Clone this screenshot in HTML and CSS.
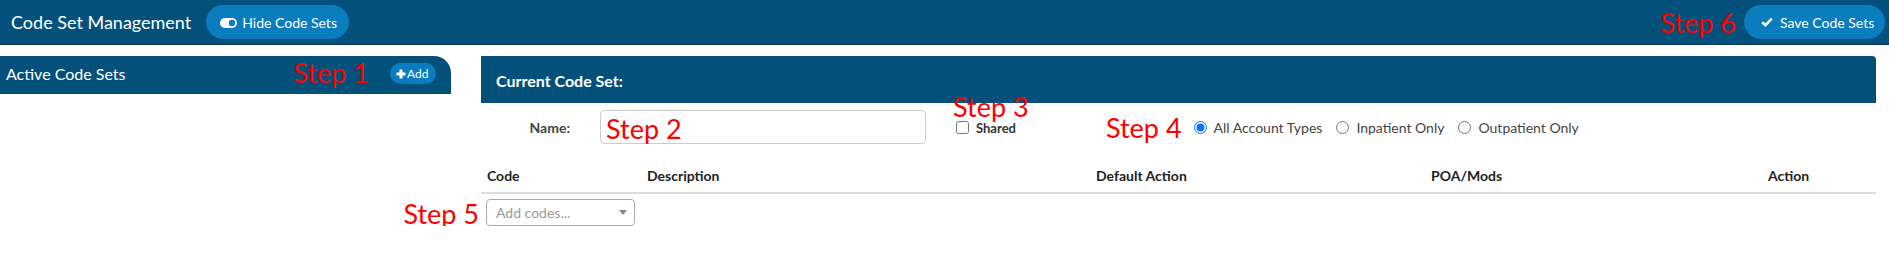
FILE: index.html
```html
<!DOCTYPE html>
<html lang="en">
<head>
<meta charset="utf-8">
<title>Code Set Management</title>
<link rel="stylesheet" href="styles.css">
</head>
<body>
<header class="topbar">
  <h1 class="page-title">Code Set Management</h1>
  <button class="pill-btn hide-btn" type="button">
    <svg class="icon-toggle" width="17" height="10" viewBox="0 0 17 10" aria-hidden="true"><rect x="0" y="0" width="17" height="10" rx="5" fill="#fff"/><circle cx="12" cy="5" r="3.2" fill="#0b7cbd"/></svg>
    <span>Hide Code Sets</span>
  </button>
  <div class="spacer"></div>
  <span class="step step6">Step 6</span>
  <button class="pill-btn save-btn" type="button">
    <svg class="icon-check" width="12" height="10" viewBox="0 0 12 10" aria-hidden="true"><path d="M1.2 5.2 L4.4 8.2 L10.8 1.6" fill="none" stroke="#fff" stroke-width="2.6" stroke-linejoin="miter" stroke-linecap="butt"/></svg>
    <span>Save Code Sets</span>
  </button>
</header>

<main class="layout">
  <section class="active-panel">
    <div class="active-head">
      <span class="active-title">Active Code Sets</span>
      <div class="spacer"></div>
      <span class="step step1">Step 1</span>
      <button class="add-btn" type="button">
        <svg width="10" height="10" viewBox="0 0 10 10" aria-hidden="true"><path d="M5 0.5 V9.5 M0.5 5 H9.5" stroke="#fff" stroke-width="3"/></svg>
        <span>Add</span>
      </button>
    </div>
  </section>

  <section class="current-panel">
    <div class="current-head">Current Code Set:</div>
    <div class="form-row">
      <label class="name-label">Name:</label>
      <div class="name-input"><span class="step step2">Step 2</span></div>
      <div class="shared">
        <span class="step step3">Step 3</span>
        <input type="checkbox" class="native-box">
        <span class="shared-label">Shared</span>
      </div>
      <span class="step step4">Step 4</span>
      <label class="radio"><input type="radio" name="acct" class="native-box" checked><span>All Account Types</span></label>
      <label class="radio"><input type="radio" name="acct" class="native-box"><span>Inpatient Only</span></label>
      <label class="radio"><input type="radio" name="acct" class="native-box"><span>Outpatient Only</span></label>
    </div>
    <div class="table-head">
      <div class="th">Code</div>
      <div class="th">Description</div>
      <div class="th">Default Action</div>
      <div class="th">POA/Mods</div>
      <div class="th">Action</div>
    </div>
    <div class="table-body">
      <div class="code-select">
        <span class="step step5">Step 5</span>
        <span class="placeholder">Add codes...</span>
        <span class="caret"></span>
      </div>
    </div>
  </section>
</main>
</body>
</html>
```

FILE: styles.css
```css
* { box-sizing: border-box; }

body {
  margin: 0;
  font-family: Lato, "Open Sans", sans-serif;
  background: #fff;
  color: #333;
}

.spacer { flex: 1; }

.step {
  font-family: Lato, sans-serif;
  font-size: 27px;
  color: #ff0000;
  line-height: 1.2;
  white-space: nowrap;
}

/* top bar */
.topbar {
  height: 45px;
  background: #03517b;
  border-bottom: 1px solid #0a3b58;
  display: flex;
  align-items: center;
  padding: 0 4px 0 11px;
}

.page-title {
  margin: 0;
  font-size: 18px;
  font-weight: 400;
  color: #fff;
}

.pill-btn {
  height: 34px;
  border: 0;
  border-radius: 17px;
  background: #0b7cbd;
  color: #fff;
  font-family: Lato, sans-serif;
  font-size: 14px;
  display: flex;
  align-items: center;
  gap: 5px;
}

.hide-btn {
  margin-left: 15px;
  width: 143px;
  padding: 0 0 0 14px;
}

.hide-btn .icon-toggle { margin-top: 1px; }

.step6 { margin-right: 8px; margin-top: 2px; }

.save-btn {
  width: 141px;
  padding: 0 0 0 17px;
  gap: 7px;
}

/* layout */
.layout {
  display: flex;
  padding-top: 11px;
}

.active-panel { width: 451px; flex: none; }

.active-head {
  height: 38px;
  background: #03517b;
  border-top-right-radius: 17px;
  display: flex;
  align-items: center;
  padding: 0 15px 3px 6px;
}

.active-title {
  color: #fff;
  font-size: 16px;
}

.step1 { margin-right: 21px; margin-top: -1px; }

.add-btn {
  width: 46px;
  height: 21px;
  border: 0;
  border-radius: 11px;
  background: #0b7cbd;
  color: #fff;
  font-family: Lato, sans-serif;
  font-size: 12px;
  display: flex;
  align-items: center;
  gap: 1px;
  padding: 0 0 0 6px;
}

.current-panel {
  width: 1395px;
  flex: none;
  margin-left: 30px;
}

.current-head {
  height: 47px;
  background: #03517b;
  border-top-right-radius: 4px;
  color: #fff;
  font-weight: 700;
  font-size: 16px;
  display: flex;
  align-items: center;
  padding: 2px 0 0 15px;
}

.form-row {
  height: 47px;
  display: flex;
  align-items: center;
  font-size: 14px;
}

.name-label {
  width: 89px;
  text-align: right;
  font-weight: 700;
  color: #444;
  margin-top: 1px;
}

.name-input {
  margin-left: 30px;
  width: 326px;
  height: 34px;
  border: 1px solid #ccc;
  border-radius: 4px;
  padding-left: 5px;
  display: flex;
  align-items: center;
}

.name-input .step2 { margin-top: 6px; }

.native-box {
  margin: 0;
  width: 13px;
  height: 13px;
  flex: none;
}

.shared {
  margin-left: 30px;
  position: relative;
  display: flex;
  align-items: center;
  gap: 7px;
  margin-top: 2px;
}

.shared .step3 {
  position: absolute;
  left: -3px;
  top: -24px;
  line-height: 0.85;
}

.shared-label {
  font-weight: 700;
  font-size: 13px;
  color: #333;
}

.step4 { margin-left: 90px; margin-right: 12px; margin-top: 3px; }

.radio {
  display: flex;
  align-items: center;
  gap: 7px;
  margin-right: 14px;
  color: #444;
  font-size: 14px;
  margin-top: 1px;
}

/* table */
.table-head {
  display: grid;
  grid-template-columns: 160px 449px 335px 337px 114px;
  height: 44px;
  padding-top: 8px;
  align-items: center;
  border-bottom: 2px solid #dddddd;
}

.th {
  padding-left: 6px;
  font-weight: 700;
  font-size: 14px;
  color: #222;
}

.table-body {
  padding: 5px 0 0 5px;
}

.code-select {
  position: relative;
  width: 149px;
  height: 27px;
  border: 1px solid #aaa;
  border-radius: 4px;
  display: flex;
  align-items: center;
  padding: 0 7px 0 9px;
}

.code-select .step5 {
  position: absolute;
  right: calc(100% + 8px);
  top: -2px;
}

.placeholder {
  flex: 1;
  color: #999;
  font-size: 14px;
}

.caret {
  width: 0;
  height: 0;
  border-left: 4px solid transparent;
  border-right: 4px solid transparent;
  border-top: 5px solid #888;
}
```
